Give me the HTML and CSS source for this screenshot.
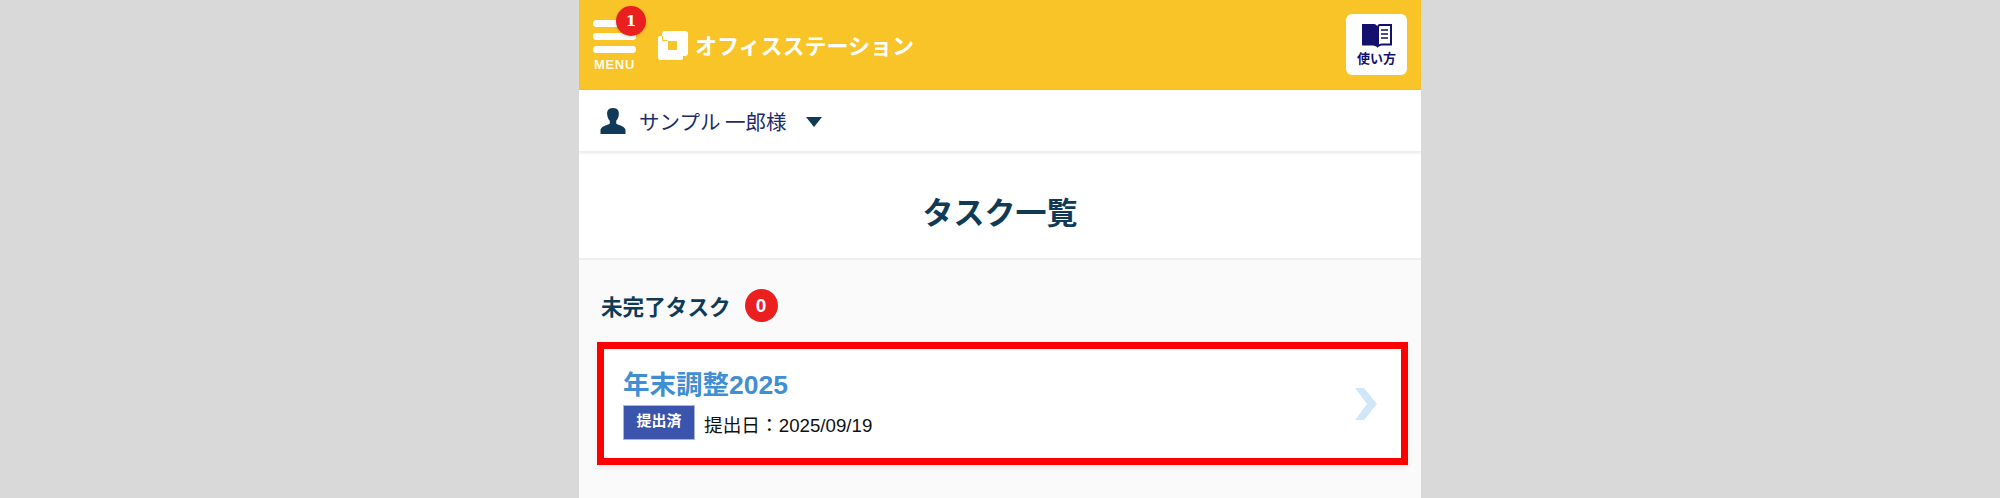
FILE: index.html
```html
<!DOCTYPE html>
<html lang="ja">
<head>
<meta charset="utf-8">
<title>タスク一覧</title>
<link rel="stylesheet" href="styles.css">
</head>
<body>
<div class="panel">
  <header class="topbar">
    <div class="menu">
      <span class="bar"></span><span class="bar"></span><span class="bar"></span>
      <span class="menu-label">MENU</span>
      <span class="menu-badge">1</span>
    </div>
    <div class="logo">
      <svg class="logo-mark" viewBox="0 0 30 29" width="30" height="29">
        <path fill="#fff" fill-rule="evenodd" d="M7 0H27Q30 0 30 3V22Q30 25 27 25H25V27Q25 29 22 29H3Q0 29 0 26V7Q0 5 2 5H4V3Q4 0 7 0ZM10 10V19H19V10Z"/>
        <path fill="none" stroke="#f8c427" stroke-width="1" d="M4.500 5V9.500H9.500"/>
      </svg>
      <span class="logo-text">オフィスステーション</span>
    </div>
    <div class="guide">
      <svg class="guide-icon" viewBox="0 0 30 25" width="30" height="25">
        <path fill="#14106e" d="M0 1H12Q14 1 15 3V24Q13 22.500 11 22.500H0Z"/>
        <path fill="none" stroke="#14106e" stroke-width="2" d="M16 3.500Q16.500 2 18 2H29V21.500H20Q18 21.500 16 23Z"/>
        <path stroke="#14106e" stroke-width="1.500" d="M19 7H26M19 11H26M19 15H26"/>
      </svg>
      <span class="guide-label">使い方</span>
    </div>
  </header>
  <div class="userbar">
    <svg class="user-icon" viewBox="0 0 26 26" width="26" height="26">
      <path fill="#0f3b58" d="M13 0C8 0 6.800 3 7.200 6.800 7.500 9.500 8.500 11.500 9.800 12.800V15.500C9 17 2 17.500.5 21.500V26H25.500V21.500C24 17.500 17 17 16.200 15.500V12.800C17.500 11.500 18.500 9.500 18.800 6.800 19.200 3 18 0 13 0Z"/>
    </svg>
    <span class="user-name">サンプル 一郎様</span>
    <span class="caret"></span>
  </div>
  <div class="titlebar"><h1 class="title">タスク一覧</h1></div>
  <main class="content">
    <div class="section-head">
      <h2 class="section-title">未完了タスク</h2>
      <span class="count">0</span>
    </div>
    <a class="task-card">
      <div class="task-main">
        <div class="task-name">年末調整2025</div>
        <div class="task-meta">
          <span class="status">提出済</span>
          <span class="date">提出日：2025/09/19</span>
        </div>
      </div>
      <svg class="chevron" viewBox="0 0 24 32" width="24" height="32">
        <path fill="#cfe7f7" d="M1 0H10L23 16 10 32H1L13 16Z"/>
      </svg>
    </a>
  </main>
</div>
</body>
</html>
```
FILE: styles.css
```css
* { box-sizing: border-box; }
html, body { margin: 0; height: 100%; }
body {
  background: #d9d9d9;
  font-family: "Liberation Sans", "Noto Sans CJK JP", sans-serif;
  text-spacing-trim: space-all;
  overflow: hidden;
}
.panel {
  width: 842px;
  height: 498px;
  margin-left: 579px;
  background: #fafafa;
  display: flex;
  flex-direction: column;
  overflow: hidden;
}
.topbar {
  height: 90px;
  flex: none;
  background: #f8c427;
  display: flex;
  align-items: flex-start;
  padding: 14px 14px 0 14px;
}
.menu {
  position: relative;
  width: 43px;
  padding-top: 6px;
  display: flex;
  flex-direction: column;
  align-items: center;
}
.bar {
  display: block;
  width: 43px;
  height: 7px;
  border-radius: 3.500px;
  background: #fff;
  margin-bottom: 6px;
}
.menu-label {
  color: #fff;
  font-size: 13px;
  font-weight: 700;
  line-height: 14px;
  margin-top: -1px;
  letter-spacing: .7px;
  white-space: nowrap;
  opacity: .9;
}
.menu-badge {
  position: absolute;
  left: 23px;
  top: -8px;
  width: 30px;
  height: 30px;
  border-radius: 50%;
  background: #ea1f1f;
  color: #fff;
  font-family: "DejaVu Serif", serif;
  font-size: 15px;
  font-weight: 700;
  line-height: 30px;
  text-align: center;
  box-shadow: 0 1px 3px rgba(0,0,0,.2);
}
.logo {
  display: flex;
  align-items: flex-start;
  margin-left: 22px;
  margin-top: 17px;
}
.logo-mark { flex: none; }
.logo-text {
  color: #fff;
  font-family: "Noto Sans CJK JP", sans-serif;
  font-size: 22px;
  font-weight: 700;
  line-height: 30px;
  margin-left: 7px;
  margin-top: -2px;
}
.guide {
  margin-left: auto;
  width: 61px;
  height: 61px;
  border-radius: 6px;
  background: #fff;
  display: flex;
  flex-direction: column;
  align-items: center;
  padding-top: 9px;
}
.guide-label {
  color: #14106e;
  font-family: "Noto Sans CJK JP", sans-serif;
  font-size: 13px;
  font-weight: 700;
  line-height: 17px;
  margin-top: 1px;
}
.userbar {
  height: 62px;
  flex: none;
  background: #fff;
  display: flex;
  align-items: center;
  padding-left: 21px;
  border-bottom: 1px solid #eee;
  box-shadow: 0 1px 3px rgba(0,0,0,.1);
  position: relative;
}
.user-icon { flex: none; }
.user-name {
  color: #1d2d6b;
  font-family: "Noto Sans CJK JP", sans-serif;
  font-size: 20.500px;
  margin-left: 13px;
}
.caret {
  width: 0;
  height: 0;
  border-left: 8.500px solid transparent;
  border-right: 8.500px solid transparent;
  border-top: 10px solid #0f3b58;
  margin-left: 20px;
  margin-top: 2px;
}
.titlebar {
  height: 108px;
  flex: none;
  background: #fff;
  border-bottom: 2px solid #eee;
  padding-top: 10px;
  display: flex;
  align-items: center;
  justify-content: center;
}
.title {
  margin: 0;
  color: #0f3b58;
  font-family: "Noto Sans CJK JP", sans-serif;
  font-size: 31px;
  font-weight: 700;
}
.content {
  flex: 1;
  padding: 0 13px 0 18px;
}
.section-head {
  height: 82px;
  display: flex;
  align-items: center;
  padding-left: 4px;
  padding-top: 8px;
}
.section-title {
  margin: 0;
  color: #0f3b58;
  font-family: "Noto Sans CJK JP", sans-serif;
  font-size: 21.600px;
  font-weight: 700;
}
.count {
  width: 33px;
  height: 33px;
  border-radius: 50%;
  background: #ea1f1f;
  color: #fff;
  font-size: 19px;
  font-weight: 700;
  line-height: 33px;
  text-align: center;
  margin-left: 14px;
}
.task-card {
  height: 123px;
  border: 7px solid #ff0000;
  background: #fff;
  display: flex;
  align-items: center;
  justify-content: space-between;
  padding: 0 23px 0 19px;
  box-shadow: 0 3px 6px rgba(0,0,0,.06);
}
.task-main { padding-top: 2px; }
.task-name {
  color: #3f8fd2;
  font-size: 26.500px;
  font-weight: 700;
  line-height: 32px;
}
.task-meta {
  display: flex;
  align-items: flex-start;
  margin-top: 4px;
}
.status {
  width: 72px;
  height: 35px;
  background: #3b55ac;
  border: 1px solid #a9b5da;
  color: #fff;
  font-size: 15px;
  font-weight: 700;
  line-height: 29px;
  text-align: center;
}
.date {
  color: #111;
  font-size: 18.700px;
  line-height: 24px;
  margin-left: 9px;
  margin-top: 9px;
}
.chevron { flex: none; }
```
